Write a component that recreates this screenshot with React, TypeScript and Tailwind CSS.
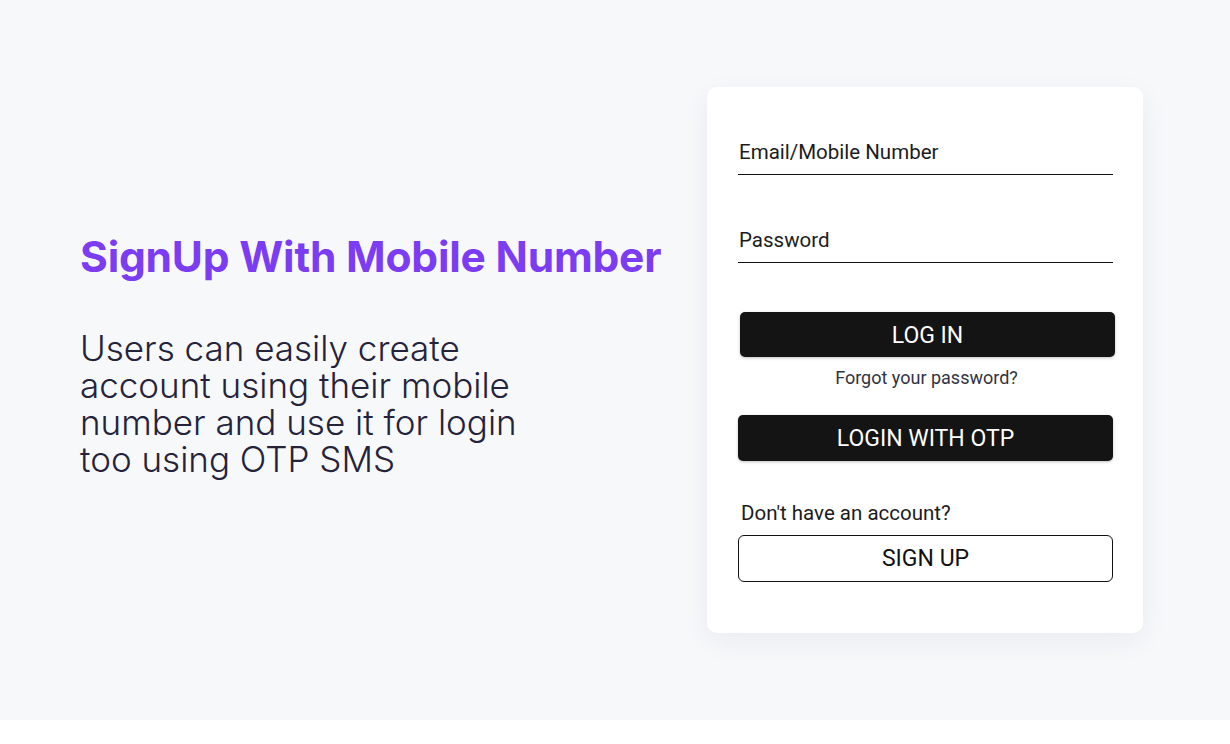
import React from 'react';

const roboto = { fontFamily: 'Roboto, "Liberation Sans", sans-serif' };

function Field({ label }: { label: string }) {
  return (
    <div className="border-b-[1.5px] border-[#111] pb-[10px] pl-[1px]">
      <span className="block text-[20.5px] leading-[24px] text-[#1c1c1c]">{label}</span>
    </div>
  );
}

export default function App() {
  return (
    <div className="w-full min-h-screen bg-white">
      <main className="h-[720px] bg-[#f7f8fa] flex items-center">
        {/* Left copy */}
        <section className="w-[627px] shrink-0 pl-[80px] pb-[9px] font-['Inter',sans-serif]">
          <h1 className="text-[42.5px] leading-[48px] font-bold text-[#7b3cf2] tracking-[-0.2px] whitespace-nowrap">
            SignUp With Mobile Number
          </h1>
          <p className="mt-[49px] text-[35px] leading-[37px] font-light text-[#25233a] whitespace-nowrap">
            Users can easily create
            <br />
            account using their mobile
            <br />
            number and use it for login
            <br />
            too using OTP SMS
          </p>
        </section>

        {/* Login card */}
        <section
          style={roboto}
          className="w-[436px] h-[546px] shrink-0 ml-[80px] bg-white rounded-[10px] shadow-[0_8px_28px_rgba(40,40,90,0.06)] pl-[31px] pr-[30px] pt-[53px]"
        >
          <Field label="Email/Mobile Number" />
          <div className="mt-[53px]">
            <Field label="Password" />
          </div>
          <button className="mt-[49px] ml-[2px] w-[375px] h-[45px] pt-[3px] rounded-[5px] bg-[#141414] text-white text-[23px] shadow-[0_1px_3px_rgba(0,0,0,0.25)]">
            LOG IN
          </button>
          <p className="mt-[10px] text-center text-[18px] leading-[22px] text-[#2f3342] pl-[2px]">
            Forgot your password?
          </p>
          <button className="mt-[26px] w-[375px] h-[46px] pt-[2px] rounded-[5px] bg-[#141414] text-white text-[23px] shadow-[0_1px_3px_rgba(0,0,0,0.25)]">
            LOGIN WITH OTP
          </button>
          <p className="mt-[40px] ml-[3px] text-[20.5px] leading-[24px] text-[#1c1c1c]">Don't have an account?</p>
          <button className="mt-[10px] w-[375px] h-[47px] pt-[2px] rounded-[6px] border-[1.5px] border-[#111] bg-white text-[#111] text-[23px]">
            SIGN UP
          </button>
        </section>
      </main>
    </div>
  );
}
